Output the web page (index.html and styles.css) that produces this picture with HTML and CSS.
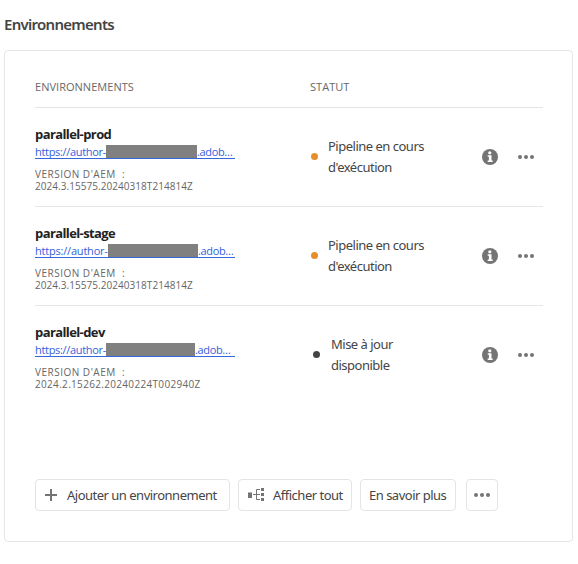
FILE: index.html
```
<!DOCTYPE html>
<html lang="fr">
<head>
<meta charset="utf-8">
<title>Environnements</title>
<link rel="stylesheet" href="styles.css">
</head>
<body>
<svg width="0" height="0" class="defs">
  <symbol id="info" viewBox="0 0 16 16"><circle cx="8" cy="8" r="8" fill="#747474"/><circle cx="7.8" cy="3.8" r="1.6" fill="#fff"/><path d="M5.7 6.3h3.8v5.2h1.2V13H5.7v-1.5h1.2V7.8H5.7z" fill="#fff"/></symbol>
  <symbol id="more" viewBox="0 0 16 4"><circle cx="2" cy="2" r="2"/><circle cx="8" cy="2" r="2"/><circle cx="14" cy="2" r="2"/></symbol>
</svg>
<h1 class="title">Environnements</h1>
<section class="card">
  <div class="head"><span class="head-env">Environnements</span><span class="head-status">Statut</span></div>
  <div class="row">
    <div class="env">
      <h2 class="name">parallel-prod</h2>
      <a class="link"><span class="host">https://author-</span><i class="mask"></i><span class="domain">.adob…</span></a>
      <p class="label">Version d'AEM &nbsp;:</p>
      <p class="version">2024.3.15575.20240318T214814Z</p>
    </div>
    <div class="status"><i class="dot"></i><p>Pipeline en cours<br>d'exécution</p></div>
    <svg class="info"><use href="#info"/></svg>
    <svg class="more"><use href="#more"/></svg>
  </div>
  <div class="row">
    <div class="env">
      <h2 class="name">parallel-stage</h2>
      <a class="link"><span class="host host-stage">https://author-</span><i class="mask mask-stage"></i><span class="domain">.adob…</span></a>
      <p class="label">Version d'AEM &nbsp;:</p>
      <p class="version">2024.3.15575.20240318T214814Z</p>
    </div>
    <div class="status"><i class="dot"></i><p>Pipeline en cours<br>d'exécution</p></div>
    <svg class="info"><use href="#info"/></svg>
    <svg class="more"><use href="#more"/></svg>
  </div>
  <div class="row row-last">
    <div class="env">
      <h2 class="name">parallel-dev</h2>
      <a class="link"><span class="host">https://author-</span><i class="mask mask-dev"></i><span class="domain">.adob…</span></a>
      <p class="label">Version d'AEM &nbsp;:</p>
      <p class="version version-dev">2024.2.15262.20240224T002940Z</p>
    </div>
    <div class="status status-update"><i class="dot"></i><p>Mise à jour<br>disponible</p></div>
    <svg class="info"><use href="#info"/></svg>
    <svg class="more"><use href="#more"/></svg>
  </div>
  <div class="actions">
    <button class="btn add"><svg width="12" height="12" viewBox="0 0 12 12"><path d="M6 0v12M0 6h12" stroke="#747474" stroke-width="2"/></svg><span>Ajouter un environnement</span></button>
    <button class="btn all"><svg width="17" height="14" viewBox="0 0 17 14"><path d="M0 4.5h4v5.5H0zM13 0h3v3h-3zM13 5h3v3h-3zM13 10h3v3h-3z" fill="#747474"/><path d="M5 6.5h7M12 1.5H8.5v10H12" fill="none" stroke="#747474"/></svg><span>Afficher tout</span></button>
    <button class="btn learn"><span>En savoir plus</span></button>
    <button class="btn dots" aria-label="Plus"><svg class="more"><use href="#more"/></svg></button>
  </div>
</section>
</body>
</html>
```
FILE: styles.css
```
* { box-sizing: border-box; margin: 0; padding: 0; }
body {
  background: #fff;
  color: #454545;
  font-family: "Noto Sans", "Open Sans", sans-serif;
  font-size: 13px;
  letter-spacing: -.5px;
  padding: 13px 5px 0 4px;
  white-space: nowrap;
}
.defs { position: absolute; }
.title { font-size: 15px; line-height: 22px; font-weight: 600; letter-spacing: -.72px; height: 37px; color: #444; }
.card { height: 492px; border: 1px solid #e6e6e6; border-radius: 4px; padding: 26px 29px 0 30px; display: flex; flex-direction: column; }
.head { display: flex; height: 31px; border-bottom: 1px solid #e4e4e4; font-family: "Open Sans", sans-serif; font-size: 11px; line-height: 20px; letter-spacing: .03px; text-transform: uppercase; color: #686868; }
.head-env { width: 275px; }
.row { display: flex; height: 99px; border-bottom: 1px solid #e6e6e6; }
.row-last { border-bottom-color: transparent; }
.env { width: 275px; padding-top: 16px; font-family: "Open Sans", sans-serif; }
.name { font-size: 13px; line-height: 20px; font-weight: 700; color: #222; letter-spacing: -.6px; }
.link { display: flex; width: 200px; height: 15px; padding-top: 1px; border-bottom: 1px solid #3567dc; font-size: 11px; line-height: 14px; letter-spacing: -.32px; color: #3560dc; }
.host { width: 71px; }
.host-stage { width: 73px; letter-spacing: -.2px; }
.mask { height: 13px; width: 91px; background: #808080; }
.mask-stage { width: 90px; }
.mask-dev { width: 89px; }
.domain { letter-spacing: -.35px; }
.label, .version { font-size: 10px; line-height: 12px; color: #666; letter-spacing: .05px; }
.label { margin-top: 9px; text-transform: uppercase; letter-spacing: .5px; }
.version-dev { letter-spacing: .32px; }
.status { display: flex; align-items: center; width: 172px; padding-left: 1px; line-height: 21px; }
.dot { width: 7px; height: 7px; border-radius: 50%; background: #e68f2a; margin-right: 10px; position: relative; top: -.5px; }
.status-update { padding-left: 3px; }
.status-update .dot { background: #444; margin-right: 11px; }
.info { width: 16px; height: 16px; align-self: center; }
.more { width: 16px; height: 4px; align-self: center; fill: #747474; margin-left: 20px; }
.actions { display: flex; margin-top: 74px; }
.btn { display: flex; align-items: center; height: 32px; border: 1px solid #e4e4e4; border-radius: 4px; background: #fff; font: inherit; letter-spacing: inherit; color: #454545; margin-right: 8px; }
.add { width: 195px; padding-left: 9px; }
.add span { margin-left: 10px; }
.all { width: 114px; padding-left: 9px; }
.all span { margin-left: 8px; }
.learn { width: 96px; padding-left: 8px; margin-right: 10px; }
.dots { width: 32px; padding-left: 7px; margin: 0; }
.dots .more { margin: 0; }
```
